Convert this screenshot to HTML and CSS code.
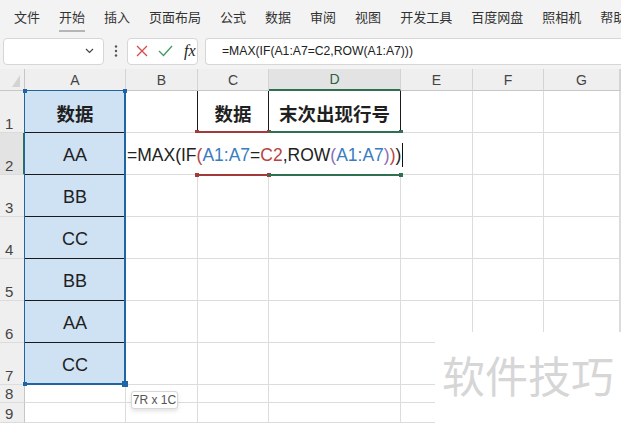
FILE: index.html
```html
<!DOCTYPE html>
<html>

<head>
    <title>Sheet - MAX IF ROW</title>
    <meta charset="UTF-8">
    <link rel="stylesheet" href="styles.css">
</head>

<body>
    <div class="top">
        <nav class="menu">
            <span>文件</span>
            <span class="active">开始</span>
            <span>插入</span>
            <span>页面布局</span>
            <span>公式</span>
            <span>数据</span>
            <span>审阅</span>
            <span>视图</span>
            <span>开发工具</span>
            <span>百度网盘</span>
            <span>照相机</span>
            <span>帮助</span>
        </nav>

        <div class="fbar">
            <div class="namebox">
                <svg width="9" height="6" viewBox="0 0 9 6"><polyline points="1,1 4.5,4.5 8,1" fill="none" stroke="#444" stroke-width="1.2" /></svg>
            </div>
            <svg class="dots" width="4" height="12" viewBox="0 0 4 12">
                <circle cx="2" cy="1.5" r="1.2" fill="#555" />
                <circle cx="2" cy="6" r="1.2" fill="#555" />
                <circle cx="2" cy="10.5" r="1.2" fill="#555" />
            </svg>
            <div class="iconbox">
                <svg width="12" height="12" viewBox="0 0 12 12">
                    <path d="M1 1 L11 11 M11 1 L1 11" stroke="#d9494a" stroke-width="1.3" fill="none" />
                </svg>
                <svg width="15" height="12" viewBox="0 0 15 12">
                    <polyline points="1,6 5.5,10.5 14,1" fill="none" stroke="#3f9c62" stroke-width="1.3" />
                </svg>
                <span class="fx">fx</span>
            </div>
            <div class="finput">=MAX(IF(A1:A7=C2,ROW(A1:A7)))</div>
        </div>
    </div>

    <div class="sheet">
        <div class="hd corner">
            <svg width="24" height="21" viewBox="0 0 24 21"><polygon points="12,18 20,18 20,6" fill="#d3d3d3" /></svg>
        </div>
        <div class="hd">A</div>
        <div class="hd">B</div>
        <div class="hd">C</div>
        <div class="hd hd-act">D</div>
        <div class="hd">E</div>
        <div class="hd">F</div>
        <div class="hd">G</div>
        <div class="hd"></div>

        <div class="rh">1</div>
        <div class="c sel bold">数据</div>
        <div class="c br"></div>
        <div class="c br bold">数据</div>
        <div class="c br bold">末次出现行号</div>
        <div class="c"></div><div class="c"></div><div class="c"></div><div class="c"></div>

        <div class="rh rh-act">2</div>
        <div class="c sel">AA</div>
        <div class="c"></div><div class="c"></div><div class="c"></div>
        <div class="c"></div><div class="c"></div><div class="c"></div><div class="c"></div>

        <div class="rh">3</div>
        <div class="c sel">BB</div>
        <div class="c"></div><div class="c"></div><div class="c"></div>
        <div class="c"></div><div class="c"></div><div class="c"></div><div class="c"></div>

        <div class="rh">4</div>
        <div class="c sel">CC</div>
        <div class="c"></div><div class="c"></div><div class="c"></div>
        <div class="c"></div><div class="c"></div><div class="c"></div><div class="c"></div>

        <div class="rh">5</div>
        <div class="c sel">BB</div>
        <div class="c"></div><div class="c"></div><div class="c"></div>
        <div class="c"></div><div class="c"></div><div class="c"></div><div class="c"></div>

        <div class="rh">6</div>
        <div class="c sel">AA</div>
        <div class="c"></div><div class="c"></div><div class="c"></div>
        <div class="c"></div><div class="c"></div><div class="c"></div><div class="c"></div>

        <div class="rh">7</div>
        <div class="c sel last">CC</div>
        <div class="c"></div><div class="c"></div><div class="c"></div>
        <div class="c"></div><div class="c"></div><div class="c"></div><div class="c"></div>

        <div class="rh">8</div>
        <div class="c"></div><div class="c"></div><div class="c"></div><div class="c"></div>
        <div class="c"></div><div class="c"></div><div class="c"></div><div class="c"></div>

        <div class="rh">9</div>
        <div class="c"></div><div class="c"></div><div class="c"></div><div class="c"></div>
        <div class="c"></div><div class="c"></div><div class="c"></div><div class="c"></div>

        <!-- overlays: range highlights, in-cell editor, tooltip -->
        <div class="range range-a">
            <i class="h tl"></i><i class="h tr"></i><i class="h bl"></i><i class="h br-big"></i>
        </div>
        <div class="ref ref-c">
            <i class="h tl"></i><i class="h tr"></i><i class="h bl"></i><i class="h brc"></i>
        </div>
        <div class="ref ref-d">
            <i class="h tr"></i><i class="h brc"></i>
        </div>

        <div class="editor">
            <span>=MAX(</span><span>IF</span><span class="red">(</span><span class="blue">A1:A7</span><span>=</span><span class="red">C2</span><span>,ROW</span><span class="purple">(</span><span class="blue">A1:A7</span><span class="purple">)</span><span class="red">)</span><span>)</span><span class="caret"></span>
        </div>

        <div class="tip">7R x 1C</div>

        <div class="watermark">软件技巧</div>
    </div>
</body>

</html>
```

FILE: styles.css
```css
:root {
    --top-bg: #f3f3f3;
    --head-bg: #efefef;
    --grid: #dcdcdc;
    --sel-fill: #cfe2f3;
    --sel-line: #1f64a3;
    --ref-red: #a23a3a;
    --ref-green: #2f7050;
    --text: #1f1f1f;
}

* {
    box-sizing: border-box;
}

body {
    margin: 0;
    width: 621px;
    height: 423px;
    overflow: hidden;
    background: #ffffff;
    color: var(--text);
    font-family: "Liberation Sans", "Noto Sans CJK SC", sans-serif;
}

.top {
    height: 69px;
    background: var(--top-bg);
}

/* ribbon tabs */
.menu {
    height: 32px;
    display: flex;
    align-items: center;
    gap: 19px;
    padding-left: 14px;
    font-family: "Noto Sans CJK SC", sans-serif;
    font-size: 13px;
    color: #333;
    white-space: nowrap;
    overflow: hidden;
}

.menu span {
    position: relative;
    padding-top: 1px;
}

.menu .active::after {
    content: "";
    position: absolute;
    left: 0;
    right: 0;
    bottom: -6px;
    height: 2px;
    background: #b5b5b5;
}

/* formula bar */
.fbar {
    display: flex;
    align-items: center;
    height: 28px;
    margin-top: 5px;
    padding-left: 3px;
}

.namebox {
    width: 101px;
    height: 27px;
    background: #fff;
    border: 1px solid #d6d6d6;
    border-radius: 4px;
    display: flex;
    align-items: center;
    justify-content: flex-end;
    padding-right: 9px;
}

.dots {
    margin: 0 9px 0 10px;
}

.iconbox {
    width: 71px;
    height: 27px;
    background: #fff;
    border: 1px solid #d6d6d6;
    border-radius: 4px;
    display: flex;
    align-items: center;
    padding-left: 8px;
    gap: 10px;
}

.fx {
    font-family: "Liberation Serif", serif;
    font-style: italic;
    font-size: 16px;
    color: #222;
    margin-left: 1px;
}

.finput {
    flex: 1;
    height: 27px;
    margin-left: 7px;
    background: #fff;
    border: 1px solid #d6d6d6;
    border-right: none;
    border-radius: 4px 0 0 4px;
    padding-left: 16px;
    display: flex;
    align-items: center;
    font-size: 12.2px;
    color: #222;
}

/* grid */
.sheet {
    position: relative;
    display: grid;
    grid-template-columns: 25px 101px 72px 71px 132px 72px 71px 76px 1fr;
    grid-template-rows: 22px repeat(7, 42px) 18px 1fr;
    height: 354px;
}

.hd {
    background: var(--head-bg);
    border-right: 1px solid #d4d4d4;
    border-bottom: 1px solid #c6c6c6;
    display: flex;
    align-items: center;
    justify-content: center;
    font-size: 14px;
    color: #444;
}

.hd.corner {
    border-right-color: #c6c6c6;
}

.hd-act {
    background: #e3e3e3;
    border-bottom: 2px solid var(--ref-green);
    color: #2d5f45;
}

.rh {
    background: var(--head-bg);
    border-right: 1px solid #c6c6c6;
    border-bottom: 1px solid var(--grid);
    display: flex;
    align-items: flex-end;
    padding-left: 5px;
    font-size: 15px;
    line-height: 17px;
    color: #444;
    overflow: hidden;
}

.rh-act {
    background: #e3e3e3;
    border-right: 2px solid var(--ref-green);
}

.c {
    border-right: 1px solid var(--grid);
    border-bottom: 1px solid var(--grid);
    display: flex;
    align-items: center;
    justify-content: center;
    padding-top: 3px;
    font-size: 18px;
    white-space: nowrap;
}

.c.sel {
    background: var(--sel-fill);
    border-bottom-color: #1a1a1a;
}

.c.sel.last {
    border-bottom-color: var(--sel-fill);
}

.c.br {
    border-right-color: #1a1a1a;
}

.bold {
    font-family: "Noto Sans CJK SC", sans-serif;
    font-weight: 700;
    font-size: 18.5px;
    padding-top: 2px;
}

/* selection and formula reference boxes */
.range {
    position: absolute;
    left: 24px;
    top: 21px;
    width: 102px;
    height: 295px;
    border: 1px solid var(--sel-line);
    border-right-width: 2px;
    border-bottom-width: 2px;
}

.h {
    position: absolute;
    width: 4px;
    height: 4px;
    background: var(--sel-line);
}

.range .tl { left: -2px; top: -2px; }
.range .tr { right: -3px; top: -2px; }
.range .bl { left: -2px; bottom: -3px; }

.range .br-big {
    width: 6px;
    height: 6px;
    right: -4px;
    bottom: -4px;
}

.ref {
    position: absolute;
    top: 62px;
    height: 45px;
    border-top: 2px solid;
    border-bottom: 2px solid;
}

.ref-c {
    left: 197px;
    width: 72px;
    color: var(--ref-red);
    border-color: var(--ref-red);
}

.ref-d {
    left: 268px;
    width: 133px;
    color: var(--ref-green);
    border-color: var(--ref-green);
}

.ref .h {
    background: currentColor;
}

.ref .tl { left: -2px; top: -3px; }
.ref .tr { right: -2px; top: -3px; }
.ref .bl { left: -2px; bottom: -3px; }
.ref .brc { right: -2px; bottom: -3px; }

/* in-cell editor */
.editor {
    position: absolute;
    left: 126px;
    top: 64px;
    width: 282px;
    height: 40px;
    background: #fff;
    display: flex;
    align-items: center;
    padding-top: 4px;
    padding-left: 1px;
    font-size: 17.5px;
    color: #222;
    white-space: nowrap;
}

.editor .blue { color: #3a7cc0; }
.editor .red { color: #b8443f; }
.editor .purple { color: #8c6fb8; }

.caret {
    display: inline-block;
    width: 1px;
    height: 24px;
    margin-left: 1px;
    background: #111;
}

.tip {
    position: absolute;
    left: 131px;
    top: 322px;
    width: 47px;
    height: 18px;
    background: #fff;
    border: 1px solid #d8d8d8;
    border-radius: 3px;
    box-shadow: 0 2px 4px rgba(0, 0, 0, 0.12);
    font-size: 12px;
    color: #555;
    white-space: nowrap;
    display: flex;
    align-items: center;
    justify-content: center;
}

.watermark {
    position: absolute;
    left: 435px;
    top: 263px;
    right: 0;
    bottom: 0;
    background: #fff;
    padding-left: 7px;
    padding-top: 12px;
    font-family: "Noto Sans CJK SC", sans-serif;
    font-size: 43px;
    line-height: 60px;
    color: #d6d6d6;
    white-space: nowrap;
}
```
